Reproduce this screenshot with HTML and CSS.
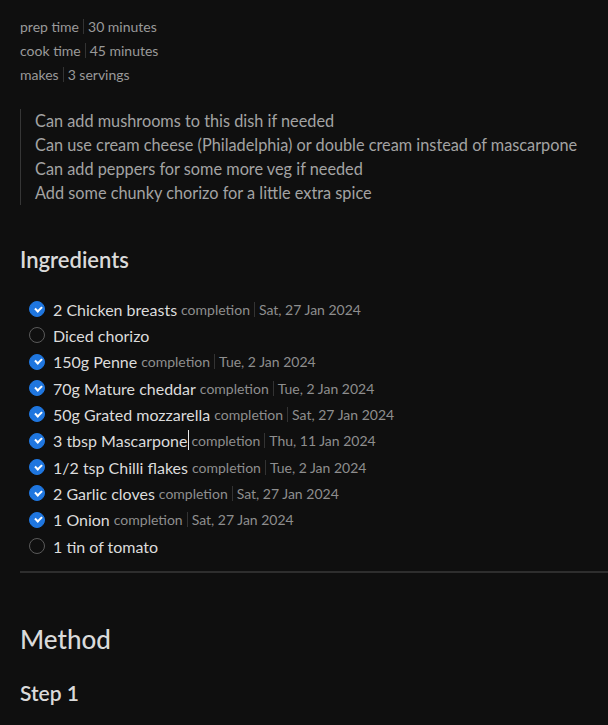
FILE: index.html
```html
<!DOCTYPE html>
<html>
<head>
<meta charset="utf-8">
<link rel="stylesheet" href="styles.css">
</head>
<body>
<div class="page">
  <div class="meta">
    <div class="meta-row"><span class="k">prep time</span><span class="sep"></span><span class="v">30 minutes</span></div>
    <div class="meta-row"><span class="k">cook time</span><span class="sep"></span><span class="v">45 minutes</span></div>
    <div class="meta-row"><span class="k">makes</span><span class="sep"></span><span class="v">3 servings</span></div>
  </div>

  <blockquote class="quote">
    <div>Can add mushrooms to this dish if needed</div>
    <div>Can use cream cheese (Philadelphia) or double cream instead of mascarpone</div>
    <div>Can add peppers for some more veg if needed</div>
    <div>Add some chunky chorizo for a little extra spice</div>
  </blockquote>

  <h2 class="h-ing">Ingredients</h2>

  <ul class="tasks">
    <li class="done"><span class="cb"></span><span class="t">2 Chicken breasts</span><span class="c">completion</span><span class="sep"></span><span class="d">Sat, 27 Jan 2024</span></li>
    <li><span class="cb"></span><span class="t">Diced chorizo</span></li>
    <li class="done"><span class="cb"></span><span class="t">150g Penne</span><span class="c">completion</span><span class="sep"></span><span class="d">Tue, 2 Jan 2024</span></li>
    <li class="done"><span class="cb"></span><span class="t">70g Mature cheddar</span><span class="c">completion</span><span class="sep"></span><span class="d">Tue, 2 Jan 2024</span></li>
    <li class="done"><span class="cb"></span><span class="t">50g Grated mozzarella</span><span class="c">completion</span><span class="sep"></span><span class="d">Sat, 27 Jan 2024</span></li>
    <li class="done"><span class="cb"></span><span class="t">3 tbsp Mascarpone<span class="caret"></span></span><span class="c">completion</span><span class="sep"></span><span class="d">Thu, 11 Jan 2024</span></li>
    <li class="done"><span class="cb"></span><span class="t">1/2 tsp Chilli flakes</span><span class="c">completion</span><span class="sep"></span><span class="d">Tue, 2 Jan 2024</span></li>
    <li class="done"><span class="cb"></span><span class="t">2 Garlic cloves</span><span class="c">completion</span><span class="sep"></span><span class="d">Sat, 27 Jan 2024</span></li>
    <li class="done"><span class="cb"></span><span class="t">1 Onion</span><span class="c">completion</span><span class="sep"></span><span class="d">Sat, 27 Jan 2024</span></li>
    <li><span class="cb"></span><span class="t">1 tin of tomato</span></li>
  </ul>

  <hr class="rule">

  <h2 class="h-method">Method</h2>
  <h3 class="h-step">Step 1</h3>
</div>
</body>
</html>
```

FILE: styles.css
```css
html, body {
  margin: 0;
  padding: 0;
  background: #0f0f0f;
  overflow: hidden;
}
body {
  font-family: Lato, "Noto Sans", sans-serif;
  color: #dadada;
}
.page {
  padding: 14px 0 0 20px;
}
.meta-row {
  display: flex;
  align-items: center;
  height: 24px;
  font-size: 14px;
  color: #9a9a9a;
}
.sep {
  display: inline-block;
  width: 1px;
  height: 15px;
  background: #333;
  margin: 0 4px;
}
.quote {
  margin: 23px 0 0 0;
  border-left: 1px solid #363636;
  padding-left: 14px;
  font-size: 16.3px;
  line-height: 24px;
  color: #a3a3a3;
}
.h-ing {
  margin: 41px 0 0 0;
  font-size: 22px;
  line-height: 28px;
  font-weight: 600;
  color: #dadada;
}
.tasks {
  list-style: none;
  margin: 22px 0 0 0;
  padding: 0 0 0 9px;
}
.tasks li {
  display: flex;
  align-items: center;
  height: 26.33px;
  font-size: 16px;
  white-space: nowrap;
}
.cb {
  box-sizing: border-box;
  width: 16px;
  height: 16px;
  border-radius: 50%;
  border: 1px solid #5a5a5a;
  margin-right: 8px;
  flex: none;
  position: relative;
}
.done .cb {
  background: #1f76df;
  border-color: #1f76df;
}
.done .cb::after {
  content: "";
  position: absolute;
  left: 4.5px;
  top: 3.5px;
  width: 5px;
  height: 3px;
  border-left: 2px solid #fff;
  border-bottom: 2px solid #fff;
  transform: rotate(-45deg);
}
.t {
  color: #dcdcdc;
  position: relative;
}
.caret {
  position: absolute;
  right: -2px;
  top: -1px;
  width: 1px;
  height: 20px;
  background: #e8e8e8;
}
.c {
  margin-left: 4px;
  font-size: 14px;
  color: #8e8e8e;
}
.d {
  font-size: 14px;
  color: #8e8e8e;
}
.rule {
  border: 0;
  height: 2px;
  background: #2e2e2e;
  margin: 12px 0 0 0;
}
.h-method {
  margin: 50px 0 0 0;
  font-size: 26px;
  line-height: 32px;
  font-weight: 500;
  color: #dadada;
}
.h-step {
  margin: 25px 0 0 0;
  font-size: 21px;
  line-height: 26px;
  font-weight: 600;
  color: #dadada;
}
```
